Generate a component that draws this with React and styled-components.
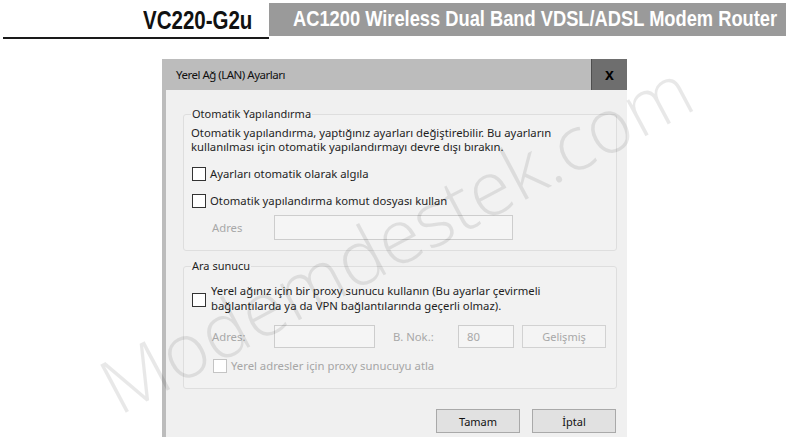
import React from "react"
import styled, { createGlobalStyle } from "styled-components"

const GlobalStyle = createGlobalStyle`
  html, body {
    margin: 0;
    padding: 0;
    background: #ffffff;
  }
  body {
    font-family: "Noto Sans", "Open Sans", sans-serif;
  }
`

const Page = styled.div`
  position: relative;
  width: 786px;
  height: 437px;
  overflow: hidden;
  background: #ffffff;
`

const Header = styled.header`
  display: grid;
  grid-template-columns: 266px 1fr;
  padding-top: 3px;
  padding-left: 3px;
`

const ModelCell = styled.div`
  height: 34px;
  border-bottom: 2px solid #1a1a1a;
  display: flex;
  align-items: flex-end;
  justify-content: flex-end;
  padding-right: 17px;
`

const Narrow = styled.span`
  display: inline-block;
  font-family: "Liberation Sans", Arial, sans-serif;
  font-weight: 700;
  font-size: ${(p) => p.$size}px;
  line-height: 1;
  color: ${(p) => p.$color};
  white-space: nowrap;
  transform: scaleX(0.82);
  transform-origin: ${(p) => p.$origin};
`

const ModelText = styled(Narrow)`
  margin-bottom: 4px;
`

const ProductCell = styled.div`
  height: 33px;
  background: #9a9a9a;
  display: flex;
  align-items: center;
  padding-left: 24px;
  overflow: hidden;
`

const Main = styled.main`
  padding-left: 162px;
  margin-top: 20px;
`

const Dialog = styled.div`
  width: 461px;
  height: 378px;
  border-left: 4px solid #bcbcbc;
  background: #f0f0f0;
  display: flex;
  flex-direction: column;
`

const TitleBar = styled.div`
  height: 31px;
  background: #bcbcbc;
  display: flex;
  align-items: center;
  justify-content: space-between;
  padding-left: 10px;
  font-size: 11.5px;
  letter-spacing: -0.5px;
  color: #111;
`

const CloseButton = styled.div`
  width: 35px;
  height: 100%;
  background: #6e6e6e;
  border-left: 1px solid #4e4e4e;
  display: flex;
  align-items: center;
  justify-content: center;
  font-family: "Liberation Sans", Arial, sans-serif;
  font-weight: 700;
  font-size: 16px;
  letter-spacing: 0;
  color: #000;
`

const Body = styled.div`
  padding: 0 10px 0 17px;
  font-size: 11.3px;
  color: #1e1e1e;
`

const Group = styled.fieldset`
  margin: ${(p) => p.$top}px 0 0 0;
  padding: 0 7px ${(p) => p.$bottom}px 7px;
  border: 1px solid #dedede;
  border-radius: 3px;
  background: #f2f2f2;
`

const Legend = styled.legend`
  padding: 0 1px;
  font-size: 11px;
  line-height: 14px;
  color: #1e1e1e;
`

const Description = styled.p`
  margin: 5px 0 0 0;
  line-height: 14px;
`

const CheckRow = styled.label`
  display: flex;
  align-items: ${(p) => (p.$multi ? "flex-start" : "center")};
  gap: ${(p) => (p.$multi ? 5 : 4)}px;
  margin-top: ${(p) => p.$top}px;
  margin-left: ${(p) => p.$indent || 1}px;
  line-height: ${(p) => (p.$multi ? 15 : 16)}px;
  color: ${(p) => (p.$disabled ? "#a6a6a6" : "#1e1e1e")};
`

const Box = styled.span`
  flex: none;
  width: 12px;
  height: 12px;
  border: 1px solid ${(p) => (p.$disabled ? "#c4c4c4" : "#333")};
  background: #ffffff;
  margin-top: ${(p) => p.$offset || 0}px;
`

const FieldRow = styled.div`
  display: flex;
  align-items: center;
  margin-top: ${(p) => p.$top}px;
  margin-left: 21px;
`

const FieldLabel = styled.span`
  width: ${(p) => p.$width}px;
  margin-left: ${(p) => p.$gap || 0}px;
  color: #a8a8a8;
`

const Input = styled.div`
  box-sizing: border-box;
  width: ${(p) => p.$width}px;
  height: ${(p) => p.$height}px;
  border: 1px solid #cdcdcd;
  background: #f5f5f5;
  color: #a8a8a8;
  display: flex;
  align-items: center;
  padding-left: 8px;
`

const Button = styled.div`
  box-sizing: border-box;
  width: 84px;
  height: ${(p) => p.$height || 24}px;
  margin-left: ${(p) => p.$gap || 0}px;
  border: 1px solid ${(p) => (p.$disabled ? "#d2d2d2" : "#a9a9a9")};
  background: ${(p) => (p.$disabled ? "#f4f4f4" : "#e1e1e1")};
  color: ${(p) => (p.$disabled ? "#a8a8a8" : "#111")};
  display: flex;
  align-items: center;
  justify-content: center;
  font-size: 11px;
`

const ButtonRow = styled.div`
  display: flex;
  justify-content: flex-end;
  gap: 12px;
  margin-top: 20px;
  padding-right: 1px;
`

const Watermark = styled.div`
  position: absolute;
  left: 395px;
  top: 236px;
  transform: translate(-50%, -50%) rotate(-28deg);
  font-family: "Open Sans", "Noto Sans", sans-serif;
  font-weight: 300;
  font-size: 76px;
  color: rgba(0, 0, 0, 0.09);
  white-space: nowrap;
  pointer-events: none;
`

export default function App() {
  return (
    <>
      <GlobalStyle />
      <Page>
        <Header>
          <ModelCell>
            <ModelText $size={25} $color="#111" $origin="right">
              VC220-G2u
            </ModelText>
          </ModelCell>
          <ProductCell>
            <Narrow $size={22.3} $color="#ffffff" $origin="left">
              AC1200 Wireless Dual Band VDSL/ADSL Modem Router
            </Narrow>
          </ProductCell>
        </Header>

        <Main>
          <Dialog>
            <TitleBar>
              <span>Yerel Ağ (LAN) Ayarları</span>
              <CloseButton>x</CloseButton>
            </TitleBar>
            <Body>
              <Group $top={17} $bottom={10}>
                <Legend>Otomatik Yapılandırma</Legend>
                <Description>
                  Otomatik yapılandırma, yaptığınız ayarları değiştirebilir. Bu ayarların
                  <br />
                  kullanılması için otomatik yapılandırmayı devre dışı bırakın.
                </Description>
                <CheckRow $top={12}>
                  <Box />
                  Ayarları otomatik olarak algıla
                </CheckRow>
                <CheckRow $top={11}>
                  <Box />
                  Otomatik yapılandırma komut dosyası kullan
                </CheckRow>
                <FieldRow $top={6}>
                  <FieldLabel $width={62}>Adres</FieldLabel>
                  <Input $width={239} $height={25} />
                </FieldRow>
              </Group>

              <Group $top={8} $bottom={14}>
                <Legend>Ara sunucu</Legend>
                <CheckRow $top={10} $multi>
                  <Box $offset={10} />
                  <span>
                    Yerel ağınız için bir proxy sunucu kullanın (Bu ayarlar çevirmeli
                    <br />
                    bağlantılarda ya da VPN bağlantılarında geçerli olmaz).
                  </span>
                </CheckRow>
                <FieldRow $top={12}>
                  <FieldLabel $width={62}>Adres:</FieldLabel>
                  <Input $width={101} $height={23} />
                  <FieldLabel $width={65} $gap={18}>
                    B. Nok.:
                  </FieldLabel>
                  <Input $width={56} $height={23}>
                    80
                  </Input>
                  <Button $disabled $gap={8} $height={23}>
                    Gelişmiş
                  </Button>
                </FieldRow>
                <CheckRow $top={10} $indent={22} $disabled>
                  <Box $disabled />
                  Yerel adresler için proxy sunucuyu atla
                </CheckRow>
              </Group>

              <ButtonRow>
                <Button>Tamam</Button>
                <Button>İptal</Button>
              </ButtonRow>
            </Body>
          </Dialog>
        </Main>

        <Watermark>Modemdestek.com</Watermark>
      </Page>
    </>
  )
}
